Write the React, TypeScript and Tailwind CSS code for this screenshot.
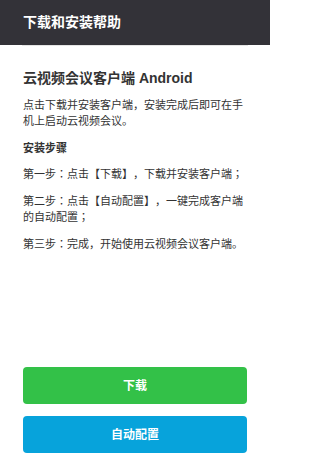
export default function App() {
  return (
    <div className="flex h-[465px] w-[270px] flex-col bg-white font-['Liberation_Sans','Noto_Sans_CJK_JP',sans-serif] [text-spacing-trim:space-all]">
      <header className="flex h-[45px] items-center bg-[#333238] px-[23px]">
        <h1 className="text-[14px] font-bold text-white">下载和安装帮助</h1>
      </header>
      <div className="mx-[22px] h-px bg-[#e5e5e5]" />

      <main className="px-[23px] pt-[22px] text-[#333]">
        <h2 className="text-[14px] font-bold leading-5">云视频会议客户端 Android</h2>
        <p className="mt-[9px] text-[11px] leading-4">
          点击下载并安装客户端，安装完成后即可在手机上启动云视频会议。
        </p>
        <h3 className="mt-[11px] text-[11px] font-semibold leading-4">安装步骤</h3>
        <p className="mt-[10px] text-[11px] leading-4">第一步：点击【下载】，下载并安装客户端；</p>
        <p className="mt-[11px] text-[11px] leading-4">
          第二步：点击【自动配置】，一键完成客户端的自动配置；
        </p>
        <p className="mt-[11px] text-[11px] leading-4">第三步：完成，开始使用云视频会议客户端。</p>
      </main>

      <div className="mt-auto flex flex-col gap-3 px-[23px] pb-3">
        <button className="h-[37px] rounded bg-[#33c148] text-[12px] font-bold text-white">下载</button>
        <button className="h-[37px] rounded bg-[#07a3db] text-[12px] font-bold text-white">自动配置</button>
      </div>
    </div>
  )
}
